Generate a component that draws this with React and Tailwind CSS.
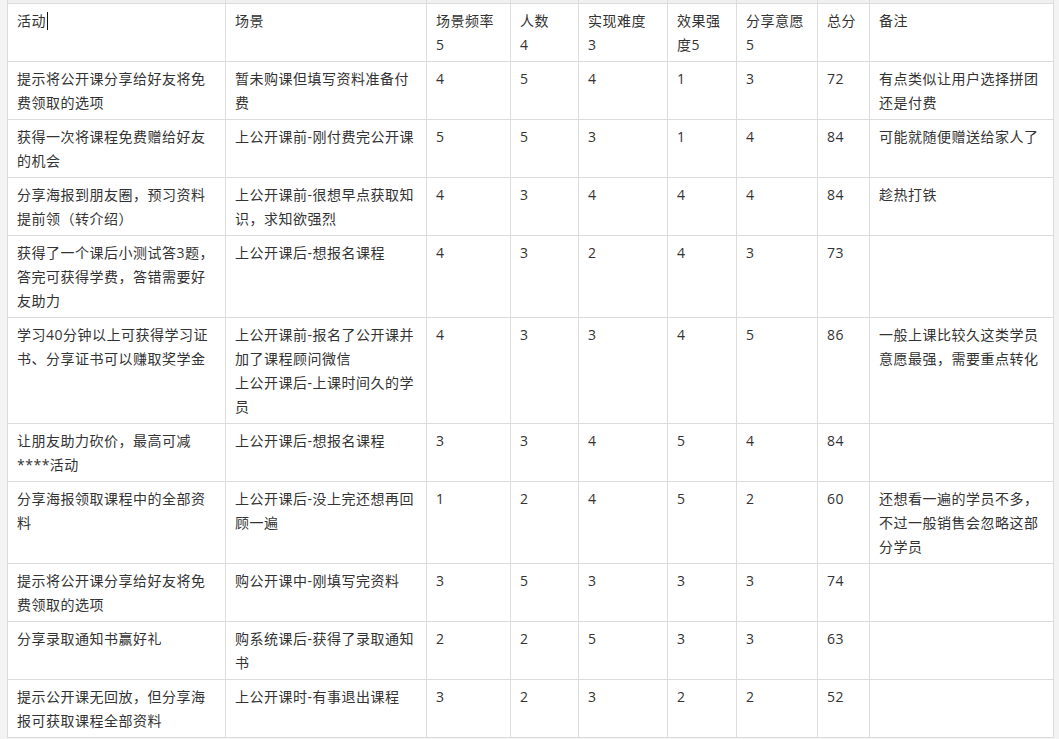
import React from "react";

const cols = "grid-cols-[218px_201px_84px_68px_89px_69px_81px_52px_184px]";

const header = [
  ["活动"],
  ["场景"],
  ["场景频率", "5"],
  ["人数", "4"],
  ["实现难度", "3"],
  ["效果强", "度5"],
  ["分享意愿", "5"],
  ["总分"],
  ["备注"],
];

const rows = [
  [["提示将公开课分享给好友将免", "费领取的选项"], ["暂未购课但填写资料准备付", "费"], "4", "5", "4", "1", "3", "72", ["有点类似让用户选择拼团", "还是付费"]],
  [["获得一次将课程免费赠给好友", "的机会"], ["上公开课前-刚付费完公开课"], "5", "5", "3", "1", "4", "84", ["可能就随便赠送给家人了"]],
  [["分享海报到朋友圈，预习资料", "提前领（转介绍）"], ["上公开课前-很想早点获取知", "识，求知欲强烈"], "4", "3", "4", "4", "4", "84", ["趁热打铁"]],
  [["获得了一个课后小测试答3题，", "答完可获得学费，答错需要好", "友助力"], ["上公开课后-想报名课程"], "4", "3", "2", "4", "3", "73", []],
  [["学习40分钟以上可获得学习证", "书、分享证书可以赚取奖学金"], ["上公开课前-报名了公开课并", "加了课程顾问微信", "上公开课后-上课时间久的学", "员"], "4", "3", "3", "4", "5", "86", ["一般上课比较久这类学员", "意愿最强，需要重点转化"]],
  [["让朋友助力砍价，最高可减", "****活动"], ["上公开课后-想报名课程"], "3", "3", "4", "5", "4", "84", []],
  [["分享海报领取课程中的全部资", "料"], ["上公开课后-没上完还想再回", "顾一遍"], "1", "2", "4", "5", "2", "60", ["还想看一遍的学员不多，", "不过一般销售会忽略这部", "分学员"]],
  [["提示将公开课分享给好友将免", "费领取的选项"], ["购公开课中-刚填写完资料"], "3", "5", "3", "3", "3", "74", []],
  [["分享录取通知书赢好礼"], ["购系统课后-获得了录取通知", "书"], "2", "2", "5", "3", "3", "63", []],
  [["提示公开课无回放，但分享海", "报可获取课程全部资料"], ["上公开课时-有事退出课程"], "3", "2", "3", "2", "2", "52", []],
];

function Cell({ lines, caret }) {
  const arr = Array.isArray(lines) ? lines : [lines];
  return (
    <div className="border-r border-b border-[#dcdcdc] bg-white pl-[9px] pr-[8px] pt-[5px] pb-[4px] leading-[24px] min-h-[57px]">
      {arr.map((l, i) => (
        <div key={i} className="whitespace-nowrap">
          {l}
          {caret && i === 0 ? (
            <span className="inline-block align-middle ml-[1px] w-px h-[18px] bg-[#111] -mt-[2px]" />
          ) : null}
        </div>
      ))}
    </div>
  );
}

export default function App() {
  return (
    <div
      className="w-[1059px] h-[739px] overflow-hidden bg-[#f3f3f3] text-[14px] tracking-[0.5px] text-[#333]"
      style={{ fontFamily: '"Open Sans", "Noto Sans CJK SC", sans-serif' }}
    >
      <div className={`ml-[7px] w-[1047px] grid ${cols} border-l border-[#dcdcdc]`}>
        {header.map((_, i) => (
          <div key={"t" + i} className="h-[3px] border-r border-[#dcdcdc] bg-[#f0f0f0]" />
        ))}
      </div>
      <div className={`ml-[7px] w-[1047px] grid ${cols} border-l border-t border-[#dcdcdc]`}>
        {header.map((h, i) => (
          <Cell key={"h" + i} lines={h} caret={i === 0} />
        ))}
        {rows.map((r, ri) =>
          r.map((c, ci) => <Cell key={ri + "-" + ci} lines={c} />)
        )}
      </div>
    </div>
  );
}
